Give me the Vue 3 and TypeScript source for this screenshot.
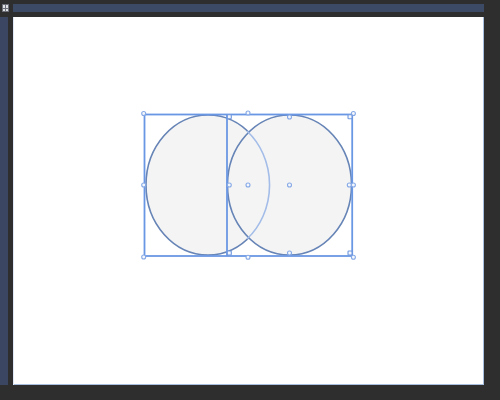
<script setup lang="ts">
const outer = [
  [143.7, 113.5], [248, 113], [353.4, 113.5], [143.7, 185], [353.4, 185],
  [143.7, 257], [248, 257.3], [353.4, 257.3], [248, 185], [289.5, 185],
  [289.5, 117], [289.5, 253], [229.3, 185], [349.3, 185],
]
const squares = [
  [229.3, 116.7], [350, 116.7], [229.3, 253], [350, 253],
]
</script>

<template>
  <div class="window">
    <div class="top">
      <div class="corner"><span></span><span></span><span></span><span></span></div>
      <div class="ruler-h"></div>
    </div>
    <div class="middle">
      <div class="ruler-v"></div>
      <div class="artboard"></div>
    </div>
    <svg class="drawing" width="500" height="400" viewBox="0 0 500 400">
      <ellipse cx="208" cy="185" rx="62" ry="70" fill="#f4f4f5" stroke="#6684b6" stroke-width="1.6" />
      <ellipse cx="289.5" cy="185" rx="62" ry="70" fill="#f4f4f5" stroke="#6684b6" stroke-width="1.6" />
      <path d="M247 131A62 70 0 0 1 247 239" fill="none" stroke="#a3bde8" stroke-width="1.6" />
      <rect x="144.5" y="114.5" width="207.7" height="141.5" fill="none" stroke="#6a97e4" stroke-width="1.8" />
      <line x1="227" y1="114.5" x2="227" y2="256" stroke="#6a97e4" stroke-width="1.8" />
      <circle v-for="(p, i) in outer" :key="i" :cx="p[0]" :cy="p[1]" r="2" fill="#f4f7fc" stroke="#86a9e6" stroke-width="1.1" />
      <rect v-for="(p, i) in squares" :key="'s' + i" :x="p[0] - 2" :y="p[1] - 2" width="4" height="4" rx="0.8" fill="#f4f7fc" stroke="#6f98de" stroke-width="1.1" />
    </svg>
  </div>
</template>

<style scoped>
.window {
  position: relative;
  width: 500px;
  height: 400px;
  box-sizing: border-box;
  padding-top: 4px;
  background: #2e2e2e;
  display: flex;
  flex-direction: column;
  overflow: hidden;
}
.top {
  display: flex;
  align-items: flex-start;
  height: 13px;
  flex: none;
}
.corner {
  width: 7px;
  height: 8px;
  margin-left: 2px;
  margin-right: 4px;
  padding: 1px;
  box-sizing: border-box;
  background: #6d7078;
  display: grid;
  grid-template-columns: 1fr 1fr;
  gap: 1px;
  flex: none;
}
.corner span {
  background: #dfe1e5;
}
.ruler-h {
  width: 471px;
  height: 8px;
  background: #3d4a66;
}
.middle {
  display: flex;
  height: 368px;
  flex: none;
}
.ruler-v {
  width: 8px;
  margin-right: 5px;
  background: #3a4662;
  flex: none;
}
.artboard {
  width: 471px;
  background: #fff;
  box-shadow: inset 1px 0 0 #dfe8f6, inset -1px -1px 0 #a9bfdf;
  flex: none;
}
.drawing {
  position: absolute;
  left: 0;
  top: 0;
}
</style>
